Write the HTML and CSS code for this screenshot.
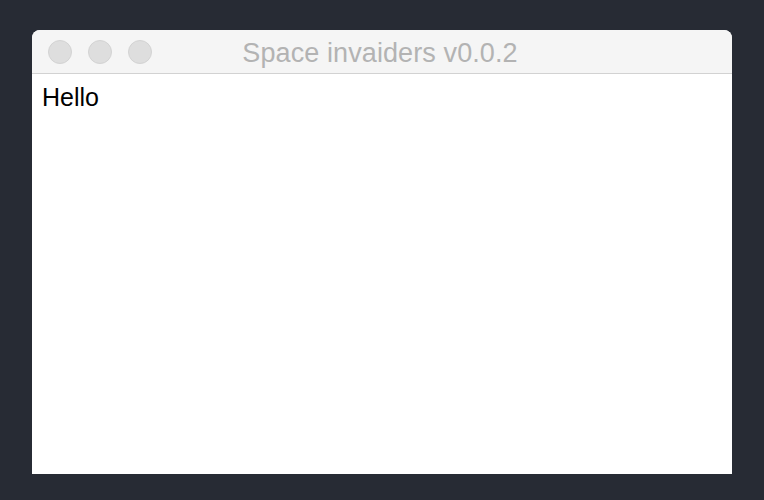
FILE: index.html
```html
<!DOCTYPE html>
<html>
<head>
<meta charset="utf-8">
<link rel="stylesheet" href="styles.css">
</head>
<body>
<div class="window">
  <div class="titlebar">
    <div class="lights">
      <span class="light"></span>
      <span class="light"></span>
      <span class="light"></span>
    </div>
    <div class="title">Space invaiders v0.0.2</div>
  </div>
  <div class="content">Hello</div>
</div>
</body>
</html>
```
FILE: styles.css
```css
html, body {
  margin: 0;
  padding: 0;
}
body {
  width: 764px;
  height: 500px;
  background: #272b34;
  font-family: "Liberation Sans", Arial, sans-serif;
  padding: 30px 32px 0;
  box-sizing: border-box;
}
.window {
  width: 700px;
  height: 444px;
  display: flex;
  flex-direction: column;
  border-radius: 8px 8px 0 0;
  overflow: hidden;
  background: #fff;
}
.titlebar {
  height: 43px;
  flex: none;
  background: #f5f5f5;
  border-bottom: 1px solid #d2d2d2;
  display: flex;
  align-items: center;
  position: relative;
}
.lights {
  display: flex;
  gap: 16px;
  padding-left: 16px;
  position: relative;
  z-index: 1;
}
.light {
  width: 22px;
  height: 22px;
  border-radius: 50%;
  background: #dedede;
  border: 1px solid #d3d3d3;
}
.title {
  position: absolute;
  left: 0;
  right: 0;
  top: 3px;
  bottom: 0;
  display: flex;
  align-items: center;
  justify-content: center;
  font-size: 27px;
  letter-spacing: 0.1px;
  color: #b3b3b3;
  padding-right: 4px;
}
.content {
  flex: 1;
  background: #fff;
  padding: 8px 10px;
  font-size: 25px;
  color: #000;
  line-height: 30px;
}
```
